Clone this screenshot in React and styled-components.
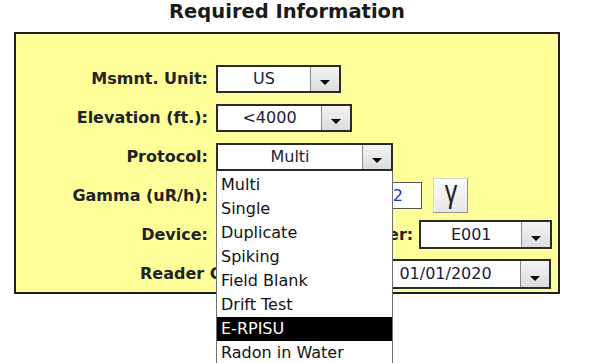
import styled, { createGlobalStyle } from "styled-components";

const GlobalStyle = createGlobalStyle`
  html, body {
    margin: 0;
    padding: 0;
    overflow: hidden;
    background: #ffffff;
    font-family: "DejaVu Sans", "Noto Sans", sans-serif;
  }
`;

const Page = styled.div`
  width: 590px;
  height: 363px;
  overflow: hidden;
`;

const Title = styled.h1`
  margin: 0;
  width: 546px;
  margin-left: 14px;
  text-align: center;
  font-size: 19.5px;
  line-height: 24px;
  font-weight: bold;
  color: #1a1a1a;
`;

const Panel = styled.div`
  position: relative;
  box-sizing: border-box;
  margin: 8px 0 0 14px;
  width: 546px;
  height: 262px;
  padding: 25px 5px 0 0;
  background: #ffff99;
  border: 2px solid #1e1e1e;
`;

const Row = styled.div`
  display: flex;
  align-items: center;
  height: 39px;
`;

const Label = styled.div`
  flex: none;
  box-sizing: border-box;
  width: ${(p) => (p.free ? "auto" : "192px")};
  margin-left: ${(p) => p.indent || 0}px;
  margin-right: ${(p) => (p.free ? 0 : 8)}px;
  text-align: right;
  font-size: 16px;
  font-weight: bold;
  color: #222;
  white-space: nowrap;
`;

const SideLabel = styled(Label)`
  width: auto;
  margin-left: auto;
  margin-right: 6px;
`;

const SelectWrap = styled.div`
  position: relative;
  flex: none;
  margin-left: ${(p) => (p.push ? "auto" : "0")};
  margin-right: ${(p) => p.right || 0}px;
  z-index: ${(p) => (p.open ? 5 : 1)};
`;

const SelectBox = styled.div`
  display: flex;
  box-sizing: border-box;
  width: ${(p) => p.w}px;
  height: ${(p) => p.h || 28}px;
  background: #fff;
  border: 2px solid #2a2a2a;
`;

const SelectValue = styled.div`
  flex: 1;
  display: flex;
  align-items: center;
  justify-content: center;
  font-size: 16px;
  color: #1b1b3a;
  white-space: nowrap;
  overflow: hidden;
`;

const SelectButton = styled.div`
  flex: none;
  width: 29px;
  display: flex;
  align-items: flex-end;
  justify-content: center;
  padding-bottom: 6px;
  box-sizing: border-box;
  border-left: 1px solid #8a8a8a;
  background: linear-gradient(#f4f4f4, #dcdcdc);
`;

const Arrow = styled.span`
  width: 0;
  height: 0;
  border-left: 5px solid transparent;
  border-right: 5px solid transparent;
  border-top: 5px solid #000;
`;

const List = styled.ul`
  position: absolute;
  top: 100%;
  left: 0;
  width: 100%;
  box-sizing: border-box;
  margin: 0;
  padding: 2px 0 0;
  list-style: none;
  background: #fff;
  border: 1px solid #6e6e6e;
  border-top: none;
`;

const Item = styled.li`
  height: 24px;
  line-height: 24px;
  padding-left: 4px;
  font-size: 16px;
  color: ${(p) => (p.active ? "#fff" : "#111")};
  background: ${(p) => (p.active ? "#000" : "transparent")};
  white-space: nowrap;
`;

const Input = styled.div`
  flex: none;
  box-sizing: border-box;
  width: 206px;
  height: 27px;
  padding-right: 18px;
  display: flex;
  align-items: center;
  justify-content: flex-end;
  background: #fff;
  border: 1px solid #555;
  font-size: 16px;
  color: #2233aa;
`;

const GammaButton = styled.div`
  flex: none;
  box-sizing: border-box;
  width: 35px;
  height: 35px;
  margin-left: 11px;
  padding-bottom: 7px;
  display: flex;
  align-items: center;
  justify-content: center;
  background: linear-gradient(#fbfbfb, #e8e8e8);
  border: 1px solid #d4d4d4;
  border-right-color: #8f8f8f;
  border-bottom-color: #8f8f8f;
  box-shadow: inset 1px 1px 0 #fff;
  font-family: "Liberation Sans", Arial, sans-serif;
  font-size: 24px;
  line-height: 1;
  color: #222;
`;

const Glyph = styled.span`
  display: inline-block;
  transform: scale(1.05, 1.3);
`;

const Select = ({ w, h, value, push, right, open, children }) => (
  <SelectWrap push={push} right={right} open={open}>
    <SelectBox w={w} h={h}>
      <SelectValue>{value}</SelectValue>
      <SelectButton>
        <Arrow />
      </SelectButton>
    </SelectBox>
    {children}
  </SelectWrap>
);

const protocols = [
  "Multi",
  "Single",
  "Duplicate",
  "Spiking",
  "Field Blank",
  "Drift Test",
  "E-RPISU",
  "Radon in Water",
];

export default function App() {
  return (
    <Page>
      <GlobalStyle />
      <Title>Required Information</Title>
      <Panel>
        <Row>
          <Label>Msmnt. Unit:</Label>
          <Select w={125} value="US" />
        </Row>
        <Row>
          <Label>Elevation (ft.):</Label>
          <Select w={136} value="<4000" />
        </Row>
        <Row>
          <Label>Protocol:</Label>
          <Select w={177} value="Multi" open>
            <List>
              {protocols.map((p) => (
                <Item key={p} active={p === "E-RPISU"}>
                  {p}
                </Item>
              ))}
            </List>
          </Select>
        </Row>
        <Row>
          <Label>Gamma (uR/h):</Label>
          <Input>12</Input>
          <GammaButton>
            <Glyph>γ</Glyph>
          </GammaButton>
        </Row>
        <Row>
          <Label>Device:</Label>
          <Select w={110} value="" />
          <SideLabel>Chamber:</SideLabel>
          <Select w={133} h={29} value="E001" right={1} />
        </Row>
        <Row>
          <Label free indent={124}>
            Reader Cal. Date:
          </Label>
          <Select w={182} h={30} value="01/01/2020" push right={2} />
        </Row>
      </Panel>
    </Page>
  );
}
